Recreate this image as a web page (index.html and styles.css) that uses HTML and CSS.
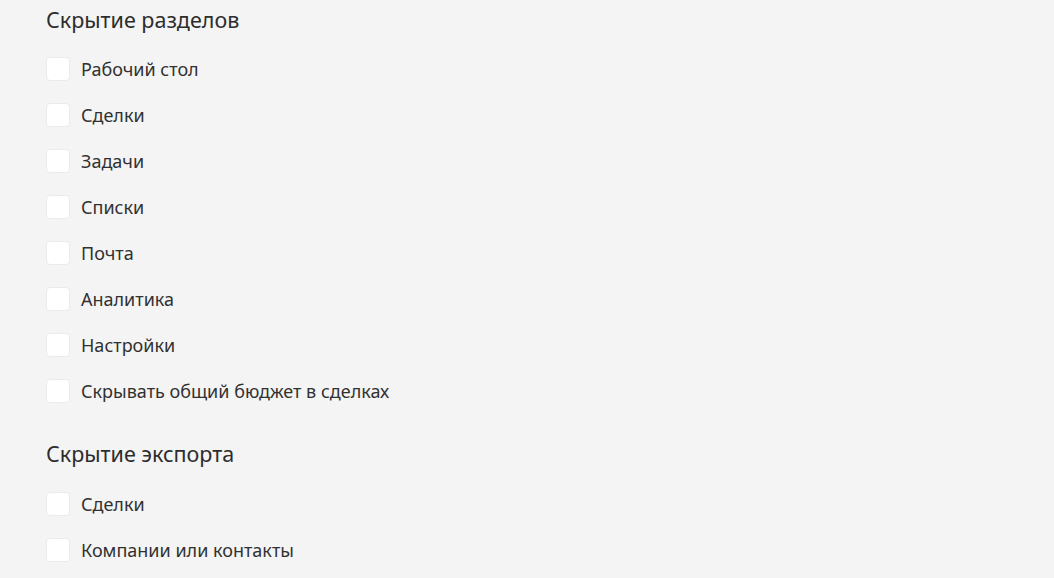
FILE: index.html
```html
<!DOCTYPE html>
<html lang="ru">
<head>
<meta charset="utf-8">
<link rel="stylesheet" href="styles.css">
</head>
<body>
<div class="page">
  <section class="group">
    <h2 class="title">Скрытие разделов</h2>
    <ul class="list">
      <li class="row"><span class="box"></span><span class="label">Рабочий стол</span></li>
      <li class="row"><span class="box"></span><span class="label">Сделки</span></li>
      <li class="row"><span class="box"></span><span class="label">Задачи</span></li>
      <li class="row"><span class="box"></span><span class="label">Списки</span></li>
      <li class="row"><span class="box"></span><span class="label">Почта</span></li>
      <li class="row"><span class="box"></span><span class="label">Аналитика</span></li>
      <li class="row"><span class="box"></span><span class="label">Настройки</span></li>
      <li class="row"><span class="box"></span><span class="label">Скрывать общий бюджет в сделках</span></li>
    </ul>
  </section>
  <section class="group second">
    <h2 class="title">Скрытие экспорта</h2>
    <ul class="list">
      <li class="row"><span class="box"></span><span class="label">Сделки</span></li>
      <li class="row"><span class="box"></span><span class="label">Компании или контакты</span></li>
    </ul>
  </section>
</div>
</body>
</html>
```
FILE: styles.css
```css
html, body {
  margin: 0;
  padding: 0;
  background: #f4f4f4;
}
body {
  font-family: "Noto Sans", "Open Sans", sans-serif;
  color: #313131;
}
.page {
  padding: 5px 0 0 46px;
}
.title {
  margin: 0;
  font-size: 21.5px;
  font-weight: 400;
  line-height: 30px;
  color: #2d2d2d;
}
.list {
  list-style: none;
  margin: 22px 0 0 0;
  padding: 0;
  display: flex;
  flex-direction: column;
  gap: 22px;
}
.row {
  display: flex;
  align-items: center;
  gap: 11px;
  height: 24px;
}
.box {
  width: 24px;
  height: 24px;
  box-sizing: border-box;
  background: #ffffff;
  border: 1px solid #ebebeb;
  border-radius: 4px;
  flex: none;
}
.label {
  font-size: 18px;
  line-height: 24px;
}
.second {
  margin-top: 36px;
}
.second .list {
  margin-top: 23px;
}
```
